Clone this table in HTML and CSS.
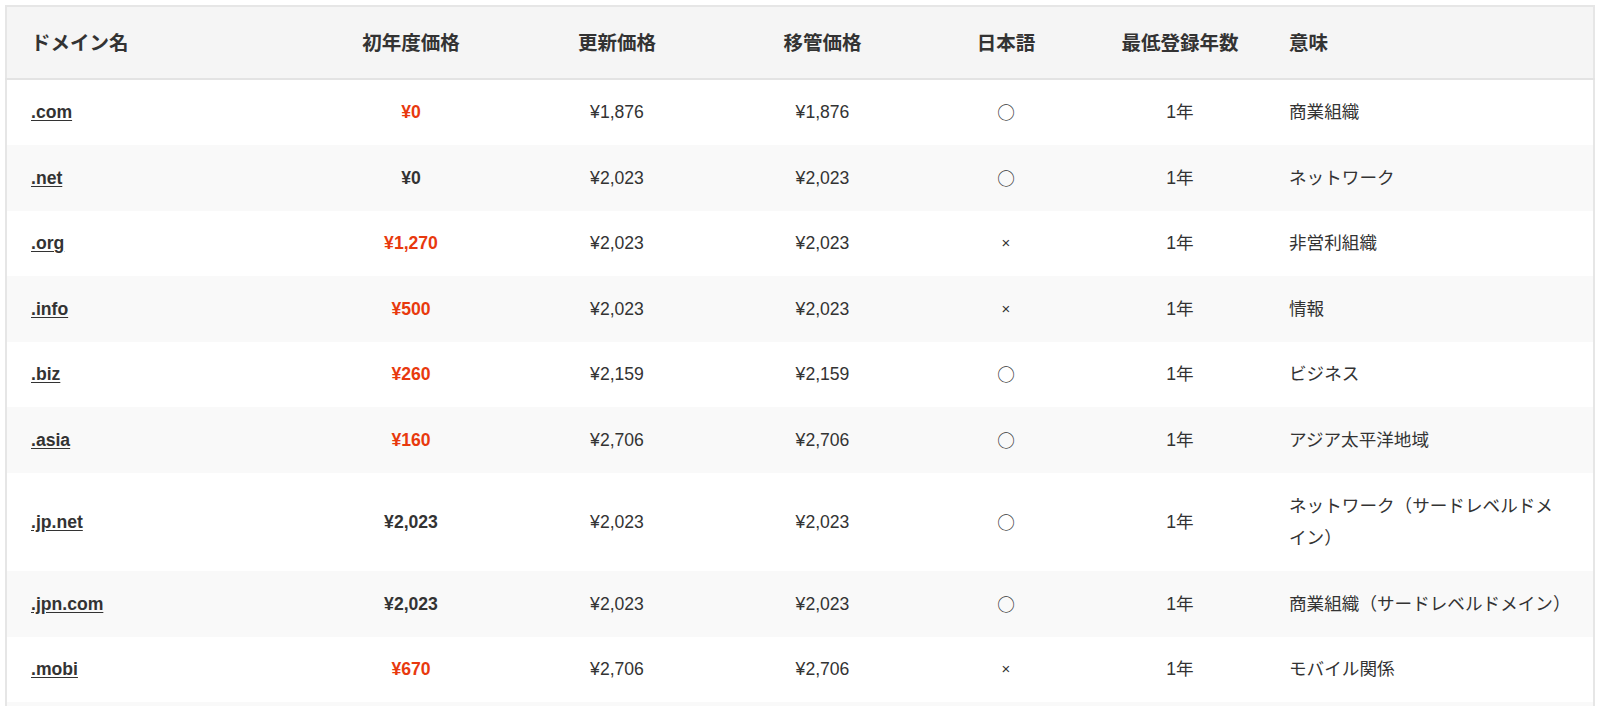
FILE: index.html
```html
<!DOCTYPE html>
<html lang="ja">
<head>
<meta charset="utf-8">
<title>ドメイン料金表</title>
<link rel="stylesheet" href="styles.css">
</head>
<body>
<div class="wrap">
<table class="price-table">
  <colgroup>
    <col class="c-name"><col class="c-price"><col class="c-price"><col class="c-price2"><col class="c-jp"><col class="c-min"><col class="c-mean">
  </colgroup>
  <thead>
    <tr>
      <th class="left">ドメイン名</th>
      <th>初年度価格</th>
      <th>更新価格</th>
      <th>移管価格</th>
      <th>日本語</th>
      <th>最低登録年数</th>
      <th class="left">意味</th>
    </tr>
  </thead>
  <tbody>
    <tr>
      <td class="left"><a class="dom" href="#">.com</a></td>
      <td class="em red">¥0</td>
      <td>¥1,876</td>
      <td>¥1,876</td>
      <td class="mark">○</td>
      <td>1年</td>
      <td class="left">商業組織</td>
    </tr>
    <tr>
      <td class="left"><a class="dom" href="#">.net</a></td>
      <td class="em">¥0</td>
      <td>¥2,023</td>
      <td>¥2,023</td>
      <td class="mark">○</td>
      <td>1年</td>
      <td class="left">ネットワーク</td>
    </tr>
    <tr>
      <td class="left"><a class="dom" href="#">.org</a></td>
      <td class="em red">¥1,270</td>
      <td>¥2,023</td>
      <td>¥2,023</td>
      <td class="cross">×</td>
      <td>1年</td>
      <td class="left">非営利組織</td>
    </tr>
    <tr>
      <td class="left"><a class="dom" href="#">.info</a></td>
      <td class="em red">¥500</td>
      <td>¥2,023</td>
      <td>¥2,023</td>
      <td class="cross">×</td>
      <td>1年</td>
      <td class="left">情報</td>
    </tr>
    <tr>
      <td class="left"><a class="dom" href="#">.biz</a></td>
      <td class="em red">¥260</td>
      <td>¥2,159</td>
      <td>¥2,159</td>
      <td class="mark">○</td>
      <td>1年</td>
      <td class="left">ビジネス</td>
    </tr>
    <tr>
      <td class="left"><a class="dom" href="#">.asia</a></td>
      <td class="em red">¥160</td>
      <td>¥2,706</td>
      <td>¥2,706</td>
      <td class="mark">○</td>
      <td>1年</td>
      <td class="left">アジア太平洋地域</td>
    </tr>
    <tr>
      <td class="left"><a class="dom" href="#">.jp.net</a></td>
      <td class="em">¥2,023</td>
      <td>¥2,023</td>
      <td>¥2,023</td>
      <td class="mark">○</td>
      <td>1年</td>
      <td class="left">ネットワーク（サードレベルドメイン）</td>
    </tr>
    <tr>
      <td class="left"><a class="dom" href="#">.jpn.com</a></td>
      <td class="em">¥2,023</td>
      <td>¥2,023</td>
      <td>¥2,023</td>
      <td class="mark">○</td>
      <td>1年</td>
      <td class="left">商業組織（サードレベルドメイン）</td>
    </tr>
    <tr>
      <td class="left"><a class="dom" href="#">.mobi</a></td>
      <td class="em red">¥670</td>
      <td>¥2,706</td>
      <td>¥2,706</td>
      <td class="cross">×</td>
      <td>1年</td>
      <td class="left">モバイル関係</td>
    </tr>
    <tr class="next-row">
      <td></td><td></td><td></td><td></td><td></td><td></td><td></td>
    </tr>
  </tbody>
</table>
</div>
</body>
</html>
```
FILE: styles.css
```css
html, body {
  margin: 0;
  padding: 0;
  background: #ffffff;
}
body {
  font-family: "Liberation Sans", "Noto Sans CJK JP", sans-serif;
  color: #333333;
}
.wrap {
  padding: 5px 5px 0 5px;
}
.price-table {
  width: 1590px;
  table-layout: fixed;
  border-collapse: collapse;
  border: 2px solid #e6e6e6;
  font-size: 17.6px;
}
.c-name { width: 302px; }
.c-price { width: 206px; }
.c-price2 { width: 205px; }
.c-jp { width: 162px; }
.c-min { width: 186px; }
.c-mean { width: auto; }

.price-table thead th {
  background: #f5f5f5;
  border-bottom: 2px solid #e3e3e3;
  font-size: 19.5px;
  font-weight: bold;
  line-height: 33px;
  padding: 19.5px 16px 18px;
  text-align: center;
  color: #333333;
}
.price-table td {
  line-height: 32.6px;
  padding: 16.5px 16px;
  text-align: center;
  vertical-align: middle;
}
.price-table tbody tr:nth-child(even) td {
  background: #f9f9f9;
}
.price-table .next-row td {
  height: 32.6px;
}
.price-table th.left,
.price-table td.left {
  text-align: left;
}
.price-table th:first-child,
.price-table td:first-child {
  padding-left: 24px;
}
.price-table td:last-child {
  padding-right: 30px;
}
.dom {
  color: #333333;
  font-weight: bold;
  text-decoration: underline;
  text-underline-offset: 2px;
}
.em {
  font-weight: bold;
}
.red {
  color: #e8390e;
}
.mark {
  font-family: "Noto Sans CJK JP", sans-serif;
}
.cross {
  font-size: 15px;
}
```
